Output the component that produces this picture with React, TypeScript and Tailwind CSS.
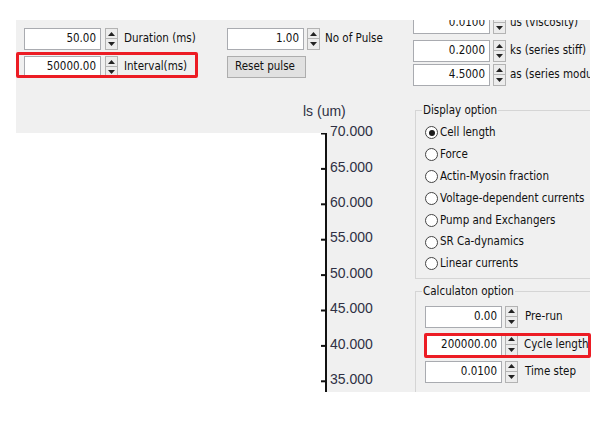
import React from "react";

const UI = "font-['DejaVu_Sans_Condensed','DejaVu_Sans',sans-serif] text-[11.5px] text-[#111]";

function Spin() {
  return (
    <div className="flex flex-col w-[13px] h-[22px] shrink-0">
      <div className="h-[11px] border border-[#b3b3b3] bg-[#ececec] flex items-center justify-center">
        <svg width="7" height="4" viewBox="0 0 7 4"><path d="M0 4 L3.5 0 L7 4Z" fill="#222" /></svg>
      </div>
      <div className="h-[11px] border border-t-0 border-[#b3b3b3] bg-[#ececec] flex items-center justify-center">
        <svg width="7" height="4" viewBox="0 0 7 4"><path d="M0 0 L7 0 L3.5 4Z" fill="#222" /></svg>
      </div>
    </div>
  );
}

function Box({ value }: { value: string }) {
  return (
    <div className="w-[77px] h-[22px] shrink-0 bg-white border border-[#a9abb0] flex items-center justify-end pr-[4px] leading-none">
      {value}
    </div>
  );
}

function Row({ value, label, gap1, gap2 }: { value: string; label: string; gap1: string; gap2: string }) {
  return (
    <div className="flex items-center h-[22px] whitespace-nowrap">
      <Box value={value} />
      <div className={gap1}><Spin /></div>
      <div className={gap2}>{label}</div>
    </div>
  );
}

function Radio({ label, checked }: { label: string; checked?: boolean }) {
  return (
    <div className="h-[21.83px] flex items-center whitespace-nowrap">
      <div className="w-[13px] h-[13px] rounded-full border border-[#444] bg-white flex items-center justify-center shrink-0">
        {checked && <div className="w-[6px] h-[6px] rounded-full bg-[#1a1a1a]" />}
      </div>
      <span className="ml-[2px]">{label}</span>
    </div>
  );
}

const ticks = ["70.000", "65.000", "60.000", "55.000", "50.000", "45.000", "40.000", "35.000"];

export default function App() {
  return (
    <div className={`relative w-[600px] h-[434px] bg-white overflow-hidden ${UI}`}>
      <div className="pt-[20px] pl-[16px]">
        <div className="w-[574px] h-[372px] bg-[#f0f0f0] flex overflow-hidden">
          {/* left area */}
          <div className="w-[394px] flex flex-col">
            <div className="h-[113px] flex flex-col">
              <div className="flex pt-[8px] pl-[8px]">
                <div className="w-[203px] flex flex-col gap-[6px]">
                  <Row value="50.00" label="Duration (ms)" gap1="ml-[4px]" gap2="ml-[6px]" />
                  <Row value="50000.00" label="Interval(ms)" gap1="ml-[4px]" gap2="ml-[6px]" />
                </div>
                <div className="flex flex-col gap-[6px]">
                  <Row value="1.00" label="No of Pulse" gap1="ml-[3px]" gap2="ml-[5px]" />
                  <div className="w-[79px] h-[22px] bg-[#e1e1e1] border border-[#adadad] flex items-center pl-[7px]">
                    Reset pulse
                  </div>
                </div>
              </div>
              <div className="mt-auto mb-[14px] pl-[287px] font-['Liberation_Sans',Arial,sans-serif] text-[14px] leading-[16px] text-[#2f3044]">
                ls (um)
              </div>
            </div>
            <div className="h-[259px] flex">
              <div className="w-[309px] h-full bg-white" />
              <div className="relative flex-1 h-full">
                <svg className="absolute left-[-4px] top-0" width="6" height="259" viewBox="0 0 6 259">
                  <rect x="4" y="0" width="2" height="259" fill="#111" />
                  {ticks.map((_, i) => (
                    <rect key={i} x="0" y={i * 35.4 - 0.5} width="5" height="2" fill="#111" />
                  ))}
                </svg>
                <div className="flex flex-col mt-[-19px] pl-[5px] font-['Liberation_Sans',Arial,sans-serif] text-[14px] text-[#2f3044]">
                  {ticks.map((t) => (
                    <div key={t} className="h-[35.4px] flex items-center">{t}</div>
                  ))}
                </div>
              </div>
            </div>
          </div>
          {/* right column */}
          <div className="w-[180px] h-full overflow-hidden flex flex-col">
            <div className="pl-[3px] mt-[-8px] flex flex-col">
              <Row value="0.0100" label="us (viscosity)" gap1="ml-[3px]" gap2="ml-[4px]" />
              <div className="mt-[6px]"><Row value="0.2000" label="ks (series stiff)" gap1="ml-[3px]" gap2="ml-[4px]" /></div>
              <div className="mt-[2px]"><Row value="4.5000" label="as (series modulus)" gap1="ml-[3px]" gap2="ml-[4px]" /></div>
            </div>
            <div className="relative mt-[24px] ml-[5px] w-[220px] border-l border-t border-b border-[#d5d5d5] pl-[9px] pt-[11px] pb-[3px] flex flex-col">
              <div className="absolute top-[-8px] left-[6px] bg-[#f0f0f0] px-[1px] leading-[14px]">Display option</div>
              <Radio label="Cell length" checked />
              <Radio label="Force" />
              <Radio label="Actin-Myosin fraction" />
              <Radio label="Voltage-dependent currents" />
              <Radio label="Pump and Exchangers" />
              <Radio label="SR Ca-dynamics" />
              <Radio label="Linear currents" />
            </div>
            <div className="relative mt-[12px] ml-[5px] w-[220px] h-[120px] border-l border-t border-[#d5d5d5] pl-[9px] pt-[14px] flex flex-col">
              <div className="absolute top-[-8px] left-[6px] bg-[#f0f0f0] px-[1px] leading-[14px]">Calculaton option</div>
              <Row value="0.00" label="Pre-run" gap1="ml-[3px]" gap2="ml-[7px]" />
              <div className="mt-[6px]"><Row value="200000.00" label="Cycle length" gap1="ml-[3px]" gap2="ml-[6px]" /></div>
              <div className="mt-[5px]"><Row value="0.0100" label="Time step" gap1="ml-[3px]" gap2="ml-[7px]" /></div>
            </div>
          </div>
        </div>
      </div>
      {/* red annotation boxes */}
      <div className="absolute left-[16px] top-[52px] w-[182px] h-[26px] border-[3px] border-[#ec1c24] rounded-[2px]" />
      <div className="absolute left-[424px] top-[333px] w-[167px] h-[25px] border-[3px] border-[#ec1c24] rounded-[2px]" />
    </div>
  );
}
